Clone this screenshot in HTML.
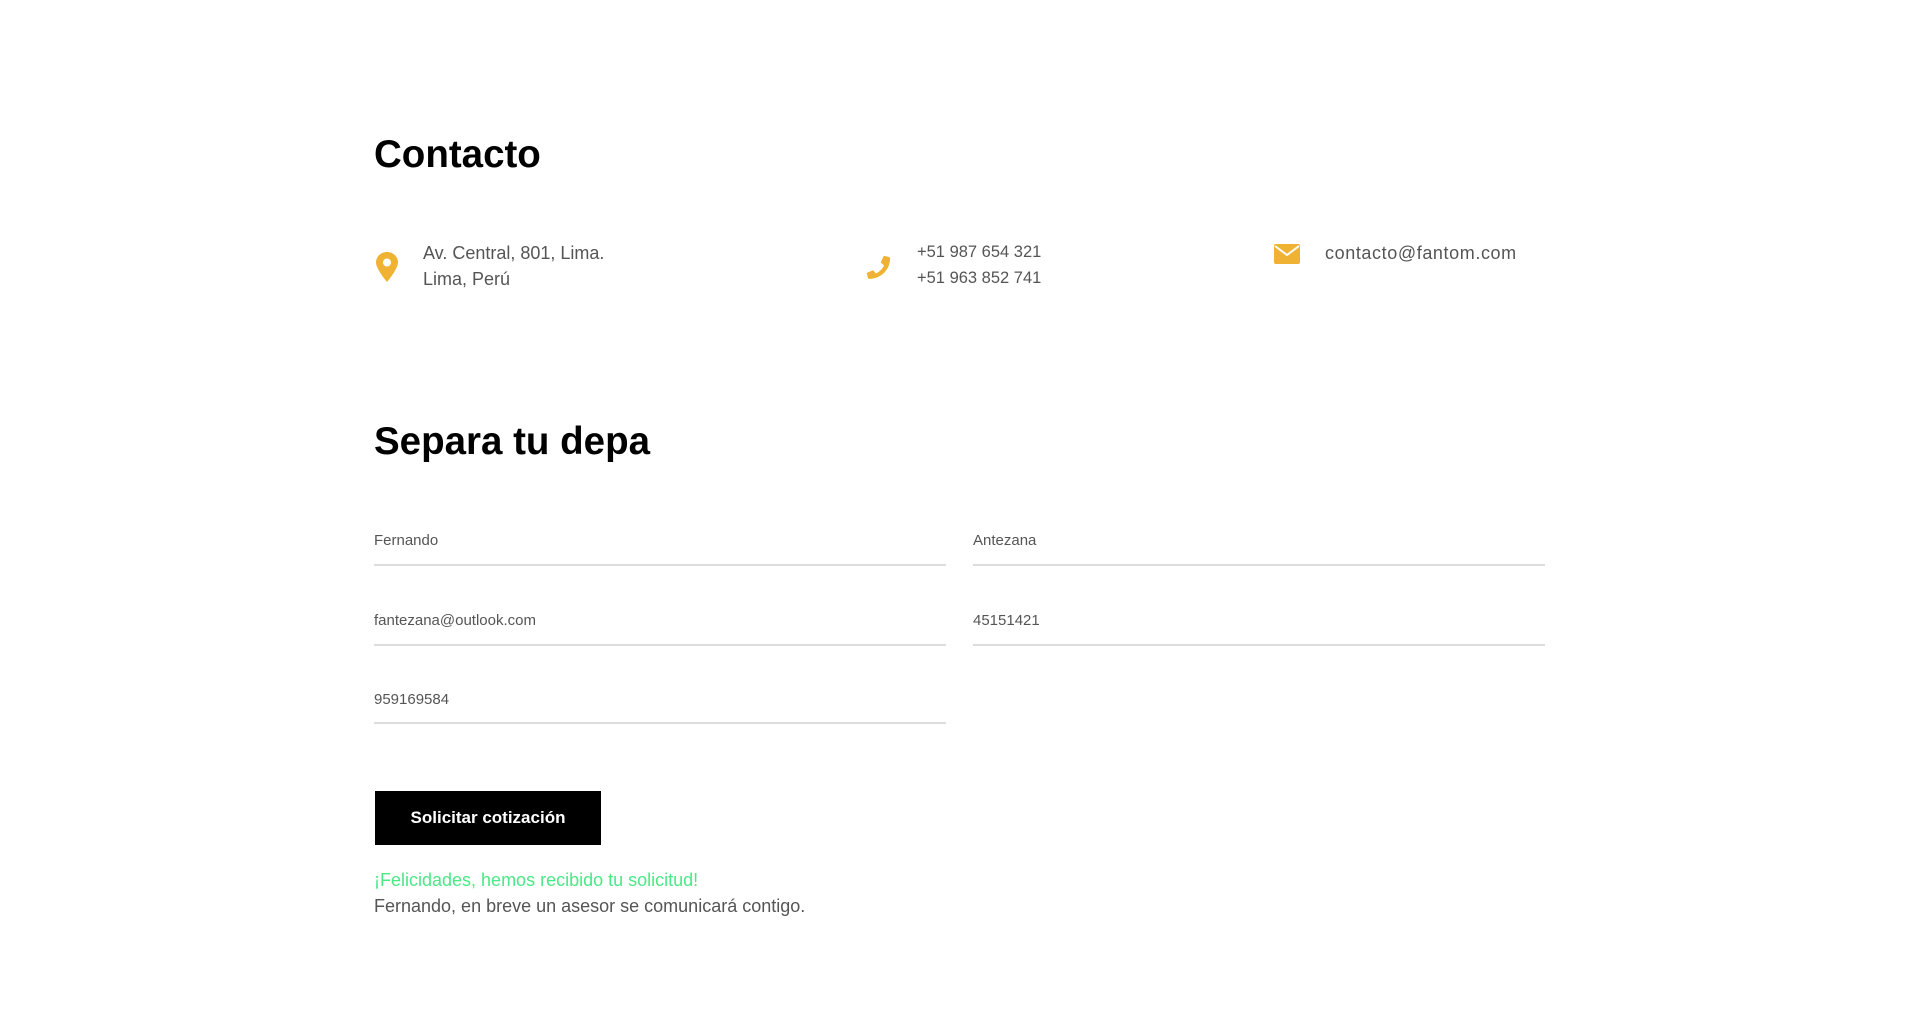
<!DOCTYPE html>
<html><head><meta charset="utf-8"><style>
body{margin:0;width:1920px;height:1035px;background:#fff;font-family:"Liberation Sans",sans-serif;position:relative;overflow:hidden}
.a{position:absolute;white-space:nowrap}
h2{position:absolute;margin:0;font-size:38px;font-weight:700;color:#000;left:374px}
.t{font-size:18px;color:#555;line-height:26px}
.f{font-size:15px;color:#555}
.l{position:absolute;height:2px;background:#ddd}
</style></head><body>
<h2 style="top:133px;font-size:38.5px">Contacto</h2>
<svg class="a" style="left:376px;top:252px" width="22" height="30" viewBox="0 0 22 30"><path d="M11 0C5 0 0 4.5 0 10.5 0 17 11 30 11 30S22 17 22 10.5C22 4.5 17 0 11 0z" fill="#f0b232"/><circle cx="11" cy="10.5" r="4" fill="#fff"/></svg>
<div class="a t" style="left:423px;top:240px">Av. Central, 801, Lima.<br>Lima, Perú</div>
<svg class="a" style="left:865px;top:253px" width="27" height="27" viewBox="0 0 24 24"><path d="M22 17.5l-4.5-2a1 1 0 0 0-1.2.3l-2 2.4A15 15 0 0 1 7 11l2.4-2a1 1 0 0 0 .3-1.2L7.7 3.3a1 1 0 0 0-1.1-.6L2.5 3.6A1 1 0 0 0 1.7 4.6C1.7 15 10 23 20.4 23a1 1 0 0 0 1-.8l1-4.2a1 1 0 0 0-.4-.5z" fill="#f0b232" transform="scale(-1,1) translate(-24,0)"/></svg>
<div class="a t" style="left:917px;top:239px;font-size:16.5px">+51 987 654 321<br>+51 963 852 741</div>
<svg class="a" style="left:1274px;top:244px" width="26" height="20" viewBox="0 0 26 20"><rect width="26" height="20" rx="2" fill="#f0b232"/><path d="M1 2l12 9 12-9" stroke="#fff" stroke-width="2" fill="none"/></svg>
<div class="a t" style="left:1325px;top:240px;letter-spacing:0.6px">contacto@fantom.com</div>
<h2 style="top:420px;font-size:38.5px">Separa tu depa</h2>
<div class="a f" style="left:374px;top:532px">Fernando</div>
<div class="l" style="left:374px;top:564px;width:572px"></div>
<div class="a f" style="left:973px;top:532px">Antezana</div>
<div class="l" style="left:973px;top:564px;width:572px"></div>
<div class="a f" style="left:374px;top:612px">fantezana@outlook.com</div>
<div class="l" style="left:374px;top:644px;width:572px"></div>
<div class="a f" style="left:374px;top:691px">959169584</div>
<div class="l" style="left:374px;top:722px;width:572px"></div>
<div class="a f" style="left:973px;top:612px">45151421</div>
<div class="l" style="left:973px;top:644px;width:572px"></div>
<div class="a" style="left:375px;top:791px;width:226px;height:54px;background:#000;color:#fff;font-weight:700;font-size:17px;line-height:54px;text-align:center">Solicitar cotización</div>
<div class="a t" style="left:374px;top:867px;color:#4be886">¡Felicidades, hemos recibido tu solicitud!</div>
<div class="a t" style="left:374px;top:893px">Fernando, en breve un asesor se comunicará contigo.</div>
</body></html>
